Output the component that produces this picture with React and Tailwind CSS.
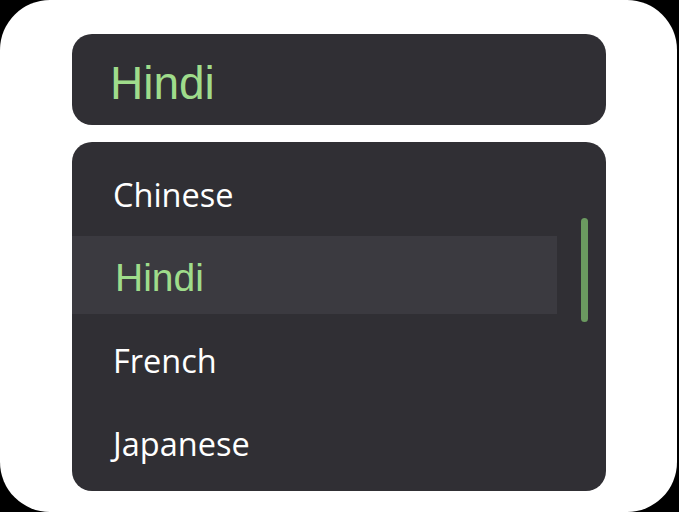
import { useState } from "react";

const languages = ["Chinese", "Hindi", "French", "Japanese"];

export default function App() {
  const [selected, setSelected] = useState("Hindi");

  return (
    <div className="w-[679px] h-[512px] bg-black">
      <div className="w-[677px] h-[512px] bg-white rounded-[50px] pt-[34px] px-[72px]">
        {/* Selected value */}
        <div className="h-[91px] w-[534px] bg-[#302f34] rounded-[20px] pl-[38px] pt-[7px]">
          <span
            className="block leading-[84px] text-[46px] text-[#9fdc8b]"
            style={{ fontFamily: '"Liberation Sans", Arial, sans-serif' }}
          >
            {selected}
          </span>
        </div>

        {/* Options list */}
        <div className="relative mt-[17px] h-[349px] w-[534px] bg-[#302f34] rounded-[20px] py-[11px] flex flex-col gap-[5px] overflow-hidden">
          {languages.map((lang) => {
            const active = lang === selected;
            return (
              <div
                key={lang}
                onClick={() => setSelected(lang)}
                className={
                  active
                    ? "h-[78px] w-[485px] bg-[#3b3a40] pt-[5px] pl-[43px] cursor-pointer"
                    : "h-[78px] w-[485px] pt-[5px] pl-[41px] cursor-pointer"
                }
              >
                {active ? (
                  <span
                    className="block leading-[73px] text-[39px] text-[#9fdc8b]"
                    style={{ fontFamily: '"Liberation Sans", Arial, sans-serif' }}
                  >
                    {lang}
                  </span>
                ) : (
                  <span
                    className="block leading-[73px] text-[32.5px] text-white"
                    style={{ fontFamily: '"Open Sans", "Noto Sans", sans-serif' }}
                  >
                    {lang}
                  </span>
                )}
              </div>
            );
          })}

          {/* Scrollbar thumb */}
          <div className="absolute left-[509px] top-[76px] w-[7px] h-[104px] rounded-full bg-[#6b9a60]" />
        </div>
      </div>
    </div>
  );
}
